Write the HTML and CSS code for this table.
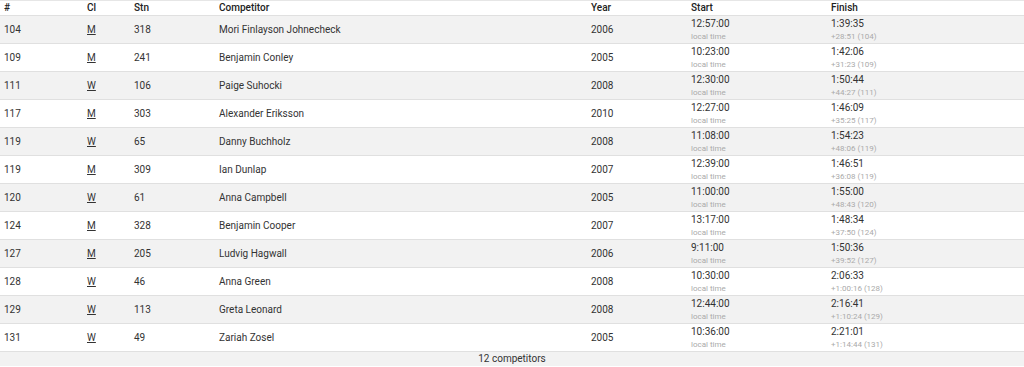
FILE: index.html
```html
<!DOCTYPE html>
<html>
<head>
<meta charset="utf-8">
<link rel="stylesheet" href="styles.css">
</head>
<body>
<table class="results">
  <colgroup>
    <col class="c-rank"><col class="c-cl"><col class="c-stn"><col class="c-name"><col class="c-year"><col class="c-start"><col class="c-finish">
  </colgroup>
  <thead>
    <tr><th>#</th><th>Cl</th><th>Stn</th><th>Competitor</th><th>Year</th><th>Start</th><th>Finish</th></tr>
  </thead>
  <tbody>
    <tr><td>104</td><td><a class="cls">M</a></td><td>318</td><td>Mori Finlayson Johnecheck</td><td>2006</td><td><div class="t">12:57:00</div><div class="sub">local time</div></td><td><div class="t">1:39:35</div><div class="sub">+28:51 (104)</div></td></tr>
    <tr><td>109</td><td><a class="cls">M</a></td><td>241</td><td>Benjamin Conley</td><td>2005</td><td><div class="t">10:23:00</div><div class="sub">local time</div></td><td><div class="t">1:42:06</div><div class="sub">+31:23 (109)</div></td></tr>
    <tr><td>111</td><td><a class="cls">W</a></td><td>106</td><td>Paige Suhocki</td><td>2008</td><td><div class="t">12:30:00</div><div class="sub">local time</div></td><td><div class="t">1:50:44</div><div class="sub">+44:27 (111)</div></td></tr>
    <tr><td>117</td><td><a class="cls">M</a></td><td>303</td><td>Alexander Eriksson</td><td>2010</td><td><div class="t">12:27:00</div><div class="sub">local time</div></td><td><div class="t">1:46:09</div><div class="sub">+35:25 (117)</div></td></tr>
    <tr><td>119</td><td><a class="cls">W</a></td><td>65</td><td>Danny Buchholz</td><td>2008</td><td><div class="t">11:08:00</div><div class="sub">local time</div></td><td><div class="t">1:54:23</div><div class="sub">+48:06 (119)</div></td></tr>
    <tr><td>119</td><td><a class="cls">M</a></td><td>309</td><td>Ian Dunlap</td><td>2007</td><td><div class="t">12:39:00</div><div class="sub">local time</div></td><td><div class="t">1:46:51</div><div class="sub">+36:08 (119)</div></td></tr>
    <tr><td>120</td><td><a class="cls">W</a></td><td>61</td><td>Anna Campbell</td><td>2005</td><td><div class="t">11:00:00</div><div class="sub">local time</div></td><td><div class="t">1:55:00</div><div class="sub">+48:43 (120)</div></td></tr>
    <tr><td>124</td><td><a class="cls">M</a></td><td>328</td><td>Benjamin Cooper</td><td>2007</td><td><div class="t">13:17:00</div><div class="sub">local time</div></td><td><div class="t">1:48:34</div><div class="sub">+37:50 (124)</div></td></tr>
    <tr><td>127</td><td><a class="cls">M</a></td><td>205</td><td>Ludvig Hagwall</td><td>2006</td><td><div class="t">9:11:00</div><div class="sub">local time</div></td><td><div class="t">1:50:36</div><div class="sub">+39:52 (127)</div></td></tr>
    <tr><td>128</td><td><a class="cls">W</a></td><td>46</td><td>Anna Green</td><td>2008</td><td><div class="t">10:30:00</div><div class="sub">local time</div></td><td><div class="t">2:06:33</div><div class="sub">+1:00:16 (128)</div></td></tr>
    <tr><td>129</td><td><a class="cls">W</a></td><td>113</td><td>Greta Leonard</td><td>2008</td><td><div class="t">12:44:00</div><div class="sub">local time</div></td><td><div class="t">2:16:41</div><div class="sub">+1:10:24 (129)</div></td></tr>
    <tr><td>131</td><td><a class="cls">W</a></td><td>49</td><td>Zariah Zosel</td><td>2005</td><td><div class="t">10:36:00</div><div class="sub">local time</div></td><td><div class="t">2:21:01</div><div class="sub">+1:14:44 (131)</div></td></tr>
  </tbody>
  <tfoot>
    <tr><td colspan="7">12 competitors</td></tr>
  </tfoot>
</table>
</body>
</html>
```
FILE: styles.css
```css
html, body {
  margin: 0;
  padding: 0;
  background: #fff;
}
body {
  font-family: Roboto, "Liberation Sans", sans-serif;
  font-size: 10px;
  color: #333;
}
.results {
  width: 100%;
  border-collapse: collapse;
  table-layout: fixed;
  border-top: 1px solid #e6e6e6;
}
.c-rank { width: 83px; }
.c-cl { width: 47px; }
.c-stn { width: 85px; }
.c-name { width: 372px; }
.c-year { width: 100px; }
.c-start { width: 140px; }
.c-finish { width: auto; }
.results th {
  text-align: left;
  font-weight: 500;
  color: #222;
  height: 14px;
  padding: 0 4px;
  line-height: 14px;
  border-bottom: 1px solid #e0e0e0;
}
.results td {
  height: 27px;
  padding: 0 4px;
  border-bottom: 1px solid #e0e0e0;
  vertical-align: middle;
  line-height: 13px;
}
.results tbody tr:nth-child(odd) {
  background: #f2f2f2;
}
.cls {
  color: #333;
  text-decoration: underline;
}
.t {
  line-height: 13px;
}
.sub {
  font-size: 8px;
  line-height: 13px;
  color: #aaa;
}
.results tfoot td {
  background: #f2f2f2;
  text-align: center;
  height: 14px;
  line-height: 14px;
  border-bottom: none;
}
```
